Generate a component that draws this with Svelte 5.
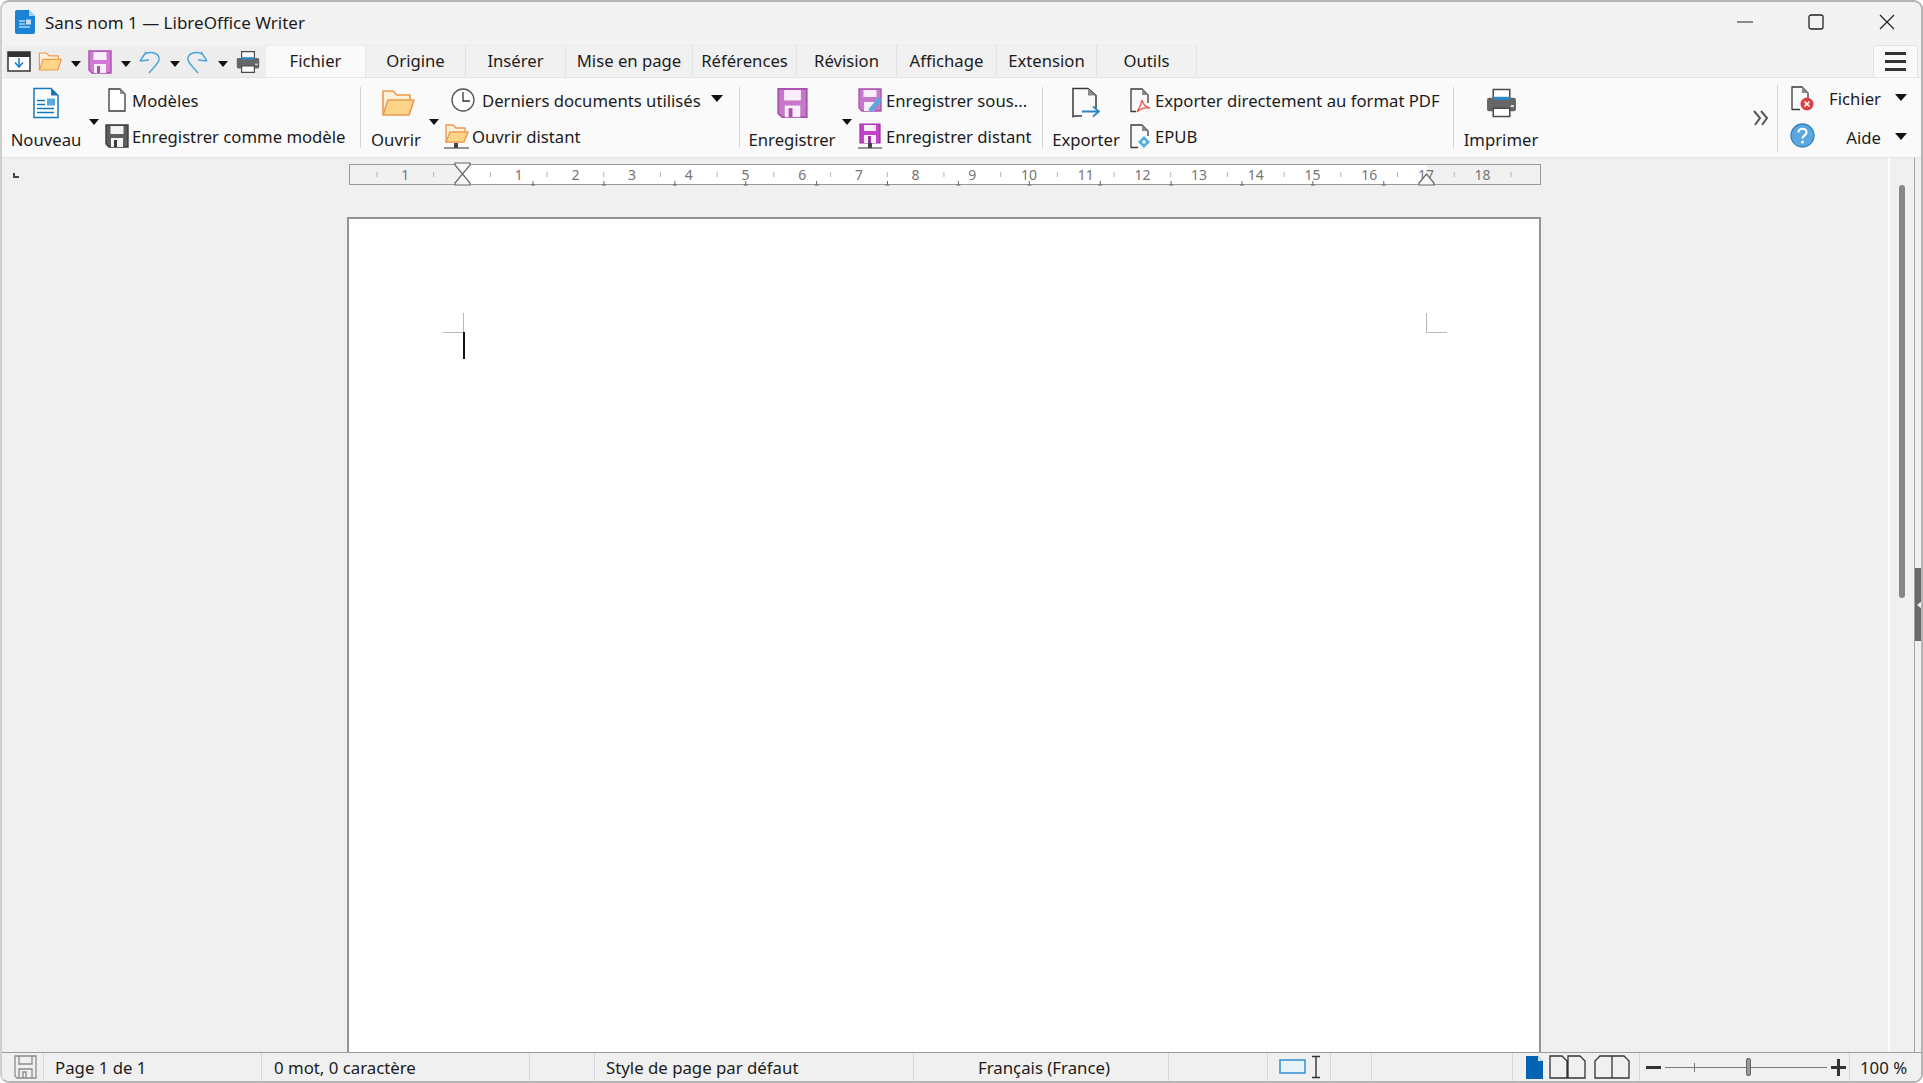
<script>
	const tabs = [
		{ label: 'Fichier', w: 100, active: true },
		{ label: 'Origine', w: 100 },
		{ label: 'Insérer', w: 100 },
		{ label: 'Mise en page', w: 127 },
		{ label: 'Références', w: 104 },
		{ label: 'Révision', w: 100 },
		{ label: 'Affichage', w: 100 },
		{ label: 'Extension', w: 100 },
		{ label: 'Outils', w: 100 }
	];

	// ruler: one cm is 56.7px, zero sits at the left margin
	const cm = 56.7;
	const zero = 113;
	const numbers = [-1, ...Array.from({ length: 18 }, (_, i) => i + 1)];
	const halves = Array.from({ length: 21 }, (_, i) => i - 2 + 0.5);
	const tabStops = Array.from({ length: 13 }, (_, i) => 184 + i * 70.9);
</script>

{#snippet floppy(size, fill, pale, line)}
	<svg width={size} height={size} viewBox="0 0 24 24">
		<path d="M1 1H23V23H4L1 20Z" fill={fill} stroke={line} stroke-width="1.4" />
		<rect x="5.5" y="2" width="13" height="8" fill={pale} />
		<rect x="6" y="14" width="12" height="9" fill={pale} />
		<rect x="9" y="16" width="3" height="7" fill={line} />
	</svg>
{/snippet}

{#snippet page(w, h)}
	<svg width={w} height={h} viewBox="0 0 18 24">
		<path d="M1 1H12L17 6V23H1Z" fill="#fff" stroke="#3a3a3a" stroke-width="1.3" />
		<path d="M12 1V6H17Z" fill="#8c8c8c" />
	</svg>
{/snippet}

{#snippet folder(w, h)}
	<svg width={w} height={h} viewBox="0 0 34 28">
		<path d="M2 26V2H12L16 6H29V12" fill="#fdf0d8" stroke="#ee9a4d" stroke-width="1.6" />
		<path d="M2 26L7 11H33L28 26Z" fill="#fcd58b" stroke="#ee9a4d" stroke-width="1.6" stroke-linejoin="round" />
	</svg>
{/snippet}

{#snippet printer(w, h)}
	<svg width={w} height={h} viewBox="0 0 30 28">
		<path d="M7 10V1H23V10" fill="#fff" stroke="#4a4a4a" stroke-width="1.5" />
		<rect x="1" y="9" width="28" height="13" rx="2" fill="#666" />
		<rect x="7" y="8" width="16" height="3" fill="#2f88c6" />
		<rect x="24" y="16" width="3" height="2" fill="#ddd" />
		<path d="M7 19H23V27H7Z" fill="#fff" stroke="#4a4a4a" stroke-width="1.5" />
	</svg>
{/snippet}

{#snippet caret()}
	<span class="caret"></span>
{/snippet}

<div class="window">
	<header class="titlebar">
		<svg class="app-icon" width="20" height="24" viewBox="0 0 20 24">
			<path d="M2 0H14L20 6V22a2 2 0 0 1-2 2H2a2 2 0 0 1-2-2V2a2 2 0 0 1 2-2Z" fill="#1c82d4" />
			<path d="M14 0L20 6H14Z" fill="#a8d4f2" />
			<path d="M4 11H10M4 14H10M4 17H15" stroke="#fff" stroke-width="1.2" />
			<rect x="11" y="9.5" width="5" height="5" fill="#bfe0f7" />
		</svg>
		<span class="title">Sans nom 1 — LibreOffice Writer</span>
		<div class="winctl">
			<svg width="16" height="16" viewBox="0 0 16 16"><path d="M0 8H16" stroke="#222" stroke-width="1.2" /></svg>
			<svg width="16" height="16" viewBox="0 0 16 16"><rect x="1" y="1" width="14" height="14" rx="2" fill="none" stroke="#222" stroke-width="1.3" /></svg>
			<svg width="16" height="16" viewBox="0 0 16 16"><path d="M1 1L15 15M15 1L1 15" stroke="#222" stroke-width="1.2" /></svg>
		</div>
	</header>

	<div class="tabrow">
		<div class="quick">
			<svg width="24" height="21" viewBox="0 0 24 21">
				<rect x="1" y="1" width="22" height="19" fill="#fff" stroke="#333" stroke-width="1.5" />
				<rect x="1" y="1" width="22" height="5" fill="#333" />
				<path d="M12 7V15M8 11.5L12 16L16 11.5" fill="none" stroke="#1c82d4" stroke-width="1.6" />
			</svg>
			<span class="q-folder">{@render folder(24, 21)}</span>
			{@render caret()}
			<span class="q-save">{@render floppy(24, '#d07ad4', '#fbeefb', '#a94fae')}</span>
			{@render caret()}
			<svg class="q-undo" width="23" height="24" viewBox="0 0 23 24">
				<path d="M2 11L8 2M2 11L11 10M5 6C10 0 22 2 21 10C20 14 14 19 11 23" fill="none" stroke="#4ba3dc" stroke-width="1.4" />
			</svg>
			{@render caret()}
			<svg class="q-redo" width="23" height="24" viewBox="0 0 23 24">
				<path d="M21 11L15 2M21 11L12 10M18 6C13 0 1 2 2 10C3 14 9 19 12 23" fill="none" stroke="#4ba3dc" stroke-width="1.4" />
			</svg>
			{@render caret()}
			<span class="q-print">{@render printer(24, 24)}</span>
		</div>
		<div class="tabs">
			{#each tabs as tab}
				<div class="tab" class:active={tab.active} style="width: {tab.w}px">{tab.label}</div>
			{/each}
		</div>
		<div class="burger"><span></span><span></span><span></span></div>
	</div>

	<div class="ribbon">
		<div class="group g1">
			<div class="big w90 first">
				<svg width="26" height="31" viewBox="0 0 26 31">
					<path d="M1 1H18L25 8V30H1Z" fill="#fff" stroke="#1577bd" stroke-width="1.5" />
					<path d="M18 1V8H25Z" fill="#1577bd" />
					<path d="M4 13H12M4 17H12M4 21H21M4 25H21" stroke="#1577bd" stroke-width="1.3" />
					<rect x="14" y="11" width="8" height="7" fill="#59a9e0" />
				</svg>
				<span class="label">Nouveau</span>
			</div>
			{@render caret()}
			<div class="col m5">
				<div class="row"><span class="ico">{@render page(18, 24)}</span>Modèles</div>
				<div class="row"><span class="ico">{@render floppy(24, '#5e5e5e', '#f4f4f4', '#3a3a3a')}</span>Enregistrer comme modèle</div>
			</div>
		</div>

		<div class="group g2">
			<div class="big w70 open">
				{@render folder(34, 28)}
				<span class="label">Ouvrir</span>
			</div>
			{@render caret()}
			<div class="col m4">
				<div class="row clock">
					<svg width="24" height="24" viewBox="0 0 24 24">
						<circle cx="12" cy="12" r="11" fill="#fff" stroke="#555" stroke-width="1.3" />
						<path d="M12 4V13H19" fill="none" stroke="#333" stroke-width="1.3" />
					</svg>
					Derniers documents utilisés
					<span class="caret after"></span>
				</div>
				<div class="row remote">
					<svg width="25" height="26" viewBox="0 0 25 26">
						<path d="M2 19V2H9L12 5H21V9" fill="#fdf0d8" stroke="#ee9a4d" stroke-width="1.4" />
						<path d="M2 19L6 9H24L20 19Z" fill="#fcd58b" stroke="#ee9a4d" stroke-width="1.4" />
						<path d="M0 25H25" stroke="#333" stroke-width="1" /><rect x="10" y="20" width="4" height="5" fill="#444" />
					</svg>
					Ouvrir distant
				</div>
			</div>
		</div>

		<div class="group g3">
			<div class="big w104">
				{@render floppy(31, '#c678c9', '#fbeefb', '#a94fae')}
				<span class="label">Enregistrer</span>
			</div>
			{@render caret()}
			<div class="col m4">
				<div class="row save-as">
					<svg width="24" height="24" viewBox="0 0 24 24">
						<path d="M1 1H23V23H4L1 20Z" fill="#c678c9" stroke="#a94fae" stroke-width="1.3" />
						<rect x="5.5" y="2" width="13" height="7" fill="#fbeefb" />
						<rect x="6" y="14" width="10" height="9" fill="#fbeefb" />
						<path d="M12 23L22 11" stroke="#59a9e0" stroke-width="4.5" />
					</svg>
					Enregistrer sous...
				</div>
				<div class="row save-as">
					<svg width="24" height="26" viewBox="0 0 24 26">
						<path d="M2 1H22V20H2Z" fill="#c243c9" stroke="#a030a8" stroke-width="1.2" />
						<rect x="6" y="2" width="12" height="6" fill="#fbeefb" />
						<rect x="6" y="12" width="12" height="8" fill="#fbeefb" />
						<rect x="10" y="13" width="3" height="7" fill="#a030a8" />
						<path d="M0 25H24" stroke="#333" stroke-width="1" /><rect x="10" y="20" width="4" height="5" fill="#444" />
					</svg>
					Enregistrer distant
				</div>
			</div>
		</div>

		<div class="group g4">
			<div class="big w86">
				<svg width="28" height="31" viewBox="0 0 28 31">
					<path d="M1 30V1H16L24 8V21M1 28.5H10" fill="none" stroke="#3a3a3a" stroke-width="1.5" />
					<path d="M16 1V8H24Z" fill="#8c8c8c" />
					<path d="M10 24H26M21 19L27 24L21 29" fill="none" stroke="#2f88c6" stroke-width="1.8" />
				</svg>
				<span class="label">Exporter</span>
			</div>
			<div class="col">
				<div class="row doc">
					<svg width="20" height="25" viewBox="0 0 20 25">
						<path d="M1 24V1H12L18 7V15M1 23.5H6" fill="none" stroke="#3a3a3a" stroke-width="1.3" />
						<path d="M12 1V7H18Z" fill="#8c8c8c" />
						<path d="M12 12C11 18 9 21 7 24C11 20 15 19 20 20C15 19 13 16 12 12Z" fill="none" stroke="#e8615a" stroke-width="1.5" />
					</svg>
					Exporter directement au format PDF
				</div>
				<div class="row doc">
					<svg width="20" height="25" viewBox="0 0 20 25">
						<path d="M1 24V1H12L18 7V12M1 23.5H8" fill="none" stroke="#3a3a3a" stroke-width="1.3" />
						<path d="M12 1V7H18Z" fill="#8c8c8c" />
						<path d="M14 12L20 18L14 24L8 18Z" fill="#4fb0dc" /><rect x="12.5" y="16.5" width="3" height="3" fill="#fff" />
					</svg>
					EPUB
				</div>
			</div>
		</div>

		<div class="group g5">
			<div class="big w94">
				{@render printer(31, 28)}
				<span class="label">Imprimer</span>
			</div>
		</div>

		<svg class="more" width="16" height="16" viewBox="0 0 16 16">
			<path d="M1 1L7 8L2 15M8 1L14 8L9 15" fill="none" stroke="#555" stroke-width="2" />
		</svg>

		<div class="group g6">
			<div class="row side">
				<svg width="23" height="25" viewBox="0 0 23 25">
					<path d="M1 24V1H11L17 7V13M1 23.5H9" fill="none" stroke="#3a3a3a" stroke-width="1.3" />
					<path d="M11 1V7H17Z" fill="#8c8c8c" />
					<circle cx="16" cy="18" r="6.5" fill="#dc3f46" />
					<path d="M13.5 15.5L18.5 20.5M18.5 15.5L13.5 20.5" stroke="#fff" stroke-width="1.6" />
				</svg>
				<span class="side-text">Fichier</span>
				<span class="caret"></span>
			</div>
			<div class="row side">
				<svg class="help" width="25" height="25" viewBox="0 0 25 25">
					<circle cx="12.5" cy="12.5" r="11.5" fill="#5aa6de" stroke="#2f7fc0" stroke-width="1.3" />
					<path d="M8.5 9.5C8.5 4.5 16.5 4.5 16.5 9.5C16.5 12.5 12.5 12.5 12.5 15.5" fill="none" stroke="#fff" stroke-width="2.2" />
					<circle cx="12.5" cy="19" r="1.5" fill="#fff" />
				</svg>
				<span class="side-text">Aide</span>
				<span class="caret"></span>
			</div>
		</div>
	</div>

	<div class="main">
		<div class="content">
			<div class="rulerbar">
				<span class="corner"></span>
				<svg class="ruler" width="1193" height="24" viewBox="0 0 1193 24">
					<rect x="0.5" y="2.5" width="1191" height="20" fill="#f1f1f1" stroke="#9a9a9a" />
					<rect x="113" y="3" width="965" height="19" fill="#fff" />
					{#each halves as n}
						<path d="M{zero + n * cm} 10V15" stroke="#b5b5b5" />
					{/each}
					{#each numbers as n}
						<text x={zero + n * cm} y="17.5" class="num">{Math.abs(n)}</text>
					{/each}
					{#each tabStops as x}
						<path d="M{x} 19V23M{x - 2} 23H{x + 2}" stroke="#666" />
					{/each}
					<path d="M106 1H121V3L113.5 12L121 21V23H106V21L113.5 12L106 3Z" fill="#f7f7f7" stroke="#666" stroke-width="1.2" />
					<path d="M1077.5 12L1070 21V23H1085V21Z" fill="#f7f7f7" stroke="#666" stroke-width="1.2" />
				</svg>
			</div>
			<div class="workspace">
				<div class="sheet">
					<span class="crop tl"></span>
					<span class="crop tr"></span>
					<span class="cursor"></span>
				</div>
			</div>
		</div>
		<div class="scrollcol">
			<div class="thumb"></div>
		</div>
		<div class="sidebar">
			<div class="handle"><span></span></div>
		</div>
	</div>

	<footer class="status">
		<div class="cell c-save">
			<svg width="23" height="24" viewBox="0 0 23 24" fill="none" stroke="#8a8a8a" stroke-width="1.3">
				<path d="M1 1H22V23H3L1 21Z" />
				<path d="M5 1V9H18V1M5 23V14H18V23M9 23V17H12V23" />
			</svg>
		</div>
		<div class="cell c-page">Page 1 de 1</div>
		<div class="cell c-words">0 mot, 0 caractère</div>
		<div class="cell c-gap"></div>
		<div class="cell c-style">Style de page par défaut</div>
		<div class="cell c-lang">Français (France)</div>
		<div class="cell c-ins"></div>
		<div class="cell c-sel">
			<svg width="48" height="24" viewBox="0 0 48 24">
				<rect x="1" y="5" width="25" height="13" fill="#e8f3fa" stroke="#3d97d3" stroke-width="1.6" />
				<path d="M37 2V22M33 1.5H41M33 22.5H41" stroke="#333" stroke-width="1.4" fill="none" />
			</svg>
		</div>
		<div class="cell c-a"></div>
		<div class="cell c-b"></div>
		<div class="cell c-views">
			<svg width="18" height="24" viewBox="0 0 18 24"><path d="M1 1H13L18 6V24H1Z" fill="#0563b4" /><path d="M13 1L18 6H13Z" fill="#cfe3f4" /></svg>
			<svg width="39" height="24" viewBox="0 0 39 24" fill="none" stroke="#333" stroke-width="1.3"><path d="M1 23V1H13L18 6V23ZM19 23V1H31L36 6V23Z" /></svg>
			<svg width="36" height="24" viewBox="0 0 36 24" fill="none" stroke="#333" stroke-width="1.3"><path d="M18 23V1H6L1 6V23ZM18 23V1H30L35 6V23Z" /></svg>
		</div>
		<div class="cell c-zoom">
			<svg width="15" height="15" viewBox="0 0 15 15"><path d="M0 7.5H15" stroke="#333" stroke-width="3" /></svg>
			<div class="slider"><i class="tick"></i><i class="knob"></i></div>
			<svg width="15" height="17" viewBox="0 0 15 17"><path d="M0 8.5H15M7.5 0V17" stroke="#333" stroke-width="3" /></svg>
		</div>
		<div class="cell c-pct">100 %</div>
	</footer>
</div>

<style>
	:global(body) {
		background: #fff;
	}

	.window {
		box-sizing: border-box;
		width: 1923px;
		height: 1083px;
		display: flex;
		flex-direction: column;
		overflow: hidden;
		background: #f3f3f3;
		border: 2px solid #b4b4b4;
		border-left-color: #cfcfcf;
		border-radius: 9px;
		font-family: "Noto Sans", "Open Sans", sans-serif;
		font-size: 16.7px;
		color: #1c1c1c;
	}

	.titlebar {
		box-sizing: border-box;
		flex: none;
		height: 43px;
		display: flex;
		align-items: center;
		padding: 0 26px 3px 13px;
	}

	.app-icon {
		margin-right: 10px;
	}

	.title {
		font-size: 17px;
	}

	.winctl {
		margin-left: auto;
		display: flex;
		gap: 55px;
		align-items: center;
	}

	.tabrow {
		flex: none;
		height: 32px;
		display: flex;
		align-items: flex-end;
	}

	.quick {
		box-sizing: border-box;
		width: 261px;
		height: 31px;
		margin-left: 3px;
		padding-left: 2px;
		display: flex;
		align-items: center;
		background: #ededed;
	}

	.q-folder { margin-left: 7px; display: flex; }
	.q-save { margin-left: 7px; display: flex; }
	.q-undo { margin-left: 7px; }
	.q-redo { margin-left: 6px; }
	.q-print { margin-left: 8px; display: flex; }
	.quick .caret { margin-left: 9px; margin-top: 4px; }

	.tabs {
		display: flex;
		height: 32px;
	}

	.tab {
		box-sizing: border-box;
		display: flex;
		align-items: center;
		justify-content: center;
		padding-bottom: 2px;
		background: #f1f1f1;
		border-right: 1px solid #e2e2e2;
		border-top: 1px solid #ececec;
		white-space: nowrap;
	}

	.tab.active {
		background: #fafafa;
		border-right-color: #e6e6e6;
	}

	.burger {
		box-sizing: border-box;
		margin-left: auto;
		margin-right: 3px;
		width: 45px;
		height: 32px;
		display: flex;
		flex-direction: column;
		justify-content: center;
		align-items: center;
		gap: 5px;
		background: #fafafa;
		border: 1px solid #e2e2e2;
		border-bottom: none;
		border-radius: 3px 3px 0 0;
	}

	.burger span {
		width: 21px;
		height: 3px;
		background: #333;
	}

	.ribbon {
		flex: none;
		height: 81px;
		display: flex;
		background: #fafafa;
		border-top: 1px solid #e4e4e4;
		border-bottom: 1px solid #e4e4e4;
		box-sizing: border-box;
		margin: 0 -2px;
		padding-left: 3px;
	}

	.group {
		display: flex;
		position: relative;
	}

	.group + .group::before {
		content: "";
		position: absolute;
		left: -1px;
		top: 9px;
		bottom: 9px;
		width: 1px;
		background: #d4d4d4;
	}

	.g1 { width: 358px; }
	.g2 { width: 379px; }
	.g3 { width: 303px; }
	.g4 { width: 411px; }
	.g5 { width: 296px; }

	.big {
		display: flex;
		flex-direction: column;
		align-items: center;
		height: 100%;
	}

	.big svg {
		height: 32px;
		margin-top: 9px;
	}

	.first {
		margin-left: -2px;
	}

	.open svg {
		margin-left: 4px;
	}

	.label {
		margin-top: 8px;
		line-height: 26px;
		white-space: nowrap;
	}

	.w90 { width: 90px; }
	.w70 { width: 70px; }
	.w104 { width: 104px; }
	.w86 { width: 86px; }
	.w94 { width: 94px; }

	.caret {
		flex: none;
		width: 0;
		height: 0;
		border-left: 5.5px solid transparent;
		border-right: 5.5px solid transparent;
		border-top: 6px solid #111;
	}

	.group > .caret {
		margin-top: 41px;
		margin-left: -2px;
	}

	.col {
		padding-top: 4px;
		display: flex;
		flex-direction: column;
	}

	.m5 { margin-left: 5px; }
	.m4 { margin-left: 4px; }

	.row {
		height: 36px;
		display: flex;
		align-items: center;
		white-space: nowrap;
	}

	.ico {
		width: 26px;
		margin-right: 2px;
		display: flex;
		justify-content: center;
	}

	.clock svg {
		margin: 0 7px 0 8px;
	}

	.caret.after {
		margin-left: 10px;
		margin-top: -3px;
		border-left-width: 6px;
		border-right-width: 6px;
		border-top-width: 7px;
	}

	.remote svg {
		margin: 0 3px 0 1px;
	}

	.save-as svg {
		margin: 0 4px 0 2px;
	}

	.doc svg {
		margin: 0 5px 0 1px;
	}

	.more {
		align-self: center;
		margin: 0 8px 0 3px;
	}

	.g6 {
		flex-direction: column;
		width: 145px;
	}

	.group.g6::before {
		display: block;
	}

	.g6::before {
		content: "";
		position: absolute;
		left: 0;
		top: 7px;
		bottom: 5px;
		width: 1px;
		background: #d4d4d4;
	}

	.side {
		height: 39px;
		padding-left: 13px;
	}

	.side:first-child {
		margin-top: 1px;
	}

	.side svg {
		width: 25px;
	}

	.side svg.help {
		margin-bottom: 5px;
	}

	.side-text {
		width: 66px;
		text-align: right;
	}

	.side .caret {
		margin-left: 14px;
		margin-top: -2px;
		border-left-width: 6px;
		border-right-width: 6px;
		border-top-width: 7px;
	}

	.main {
		flex: 1;
		min-height: 0;
		display: flex;
		margin: 0 -2px 0 0;
	}

	.content {
		flex: 1;
		min-width: 0;
		display: flex;
		flex-direction: column;
		background: #f0f0f0;
	}

	.rulerbar {
		height: 59px;
		display: flex;
		align-items: flex-start;
		padding-top: 4px;
		box-sizing: border-box;
	}

	.corner {
		width: 6px;
		height: 5px;
		margin: 11px 0 0 11px;
		border-left: 2px solid #444;
		border-bottom: 2px solid #444;
		box-sizing: border-box;
	}

	.ruler {
		margin-left: 330px;
		flex: none;
	}

	.num {
		font-family: "Noto Sans", sans-serif;
		font-size: 14px;
		fill: #757575;
		text-anchor: middle;
	}

	.workspace {
		flex: 1;
		min-height: 0;
		padding-left: 345px;
	}

	.sheet {
		box-sizing: border-box;
		position: relative;
		width: 1194px;
		height: 100%;
		background: #fff;
		border: 2px solid #949494;
		border-bottom: none;
	}

	.crop {
		position: absolute;
		width: 20px;
		height: 19px;
		top: 94px;
		border-bottom: 1px solid #b8b8b8;
	}

	.crop.tl {
		left: 94px;
		border-right: 1px solid #b8b8b8;
	}

	.crop.tr {
		left: 1077px;
		border-left: 1px solid #b8b8b8;
	}

	.cursor {
		position: absolute;
		left: 114px;
		top: 113px;
		width: 2px;
		height: 27px;
		background: #111;
	}

	.scrollcol {
		box-sizing: border-box;
		flex: none;
		width: 26px;
		background: #f0f0f0;
		border-left: 2px solid #fbfbfb;
	}

	.thumb {
		width: 6px;
		height: 413px;
		margin: 27px 0 0 9px;
		border-radius: 3px;
		background: #878787;
	}

	.sidebar {
		flex: none;
		width: 8px;
		border-left: 1px solid #a4a4a4;
		background: #f0f0f0;
	}

	.handle {
		width: 7px;
		height: 73px;
		margin-top: 410px;
		background: #6a6a6a;
		display: flex;
		align-items: center;
		justify-content: flex-end;
	}

	.handle span {
		border-top: 4px solid transparent;
		border-bottom: 4px solid transparent;
		border-right: 5px solid #eee;
	}

	.status {
		flex: none;
		height: 29px;
		display: flex;
		background: #f0f0f0;
		border-top: 1px solid #9c9c9c;
		font-size: 16.8px;
		box-sizing: border-box;
		margin-right: -2px;
	}

	.cell {
		box-sizing: border-box;
		height: 100%;
		display: flex;
		align-items: center;
		border-right: 1px solid #d6d6d6;
		white-space: nowrap;
	}

	.c-save { width: 42px; padding-left: 12px; }
	.c-page { width: 218px; padding-left: 11px; }
	.c-words { width: 268px; padding-left: 12px; }
	.c-gap { width: 65px; }
	.c-style { width: 319px; padding-left: 11px; }
	.c-lang { width: 255px; justify-content: center; padding-left: 6px; }
	.c-ins { width: 99px; }
	.c-sel { width: 63px; padding-left: 11px; }
	.c-a { width: 41px; }
	.c-b { width: 141px; }
	.c-views { width: 127px; padding-left: 12px; gap: 6px; }
	.c-zoom { width: 210px; padding: 0 3px 0 6px; gap: 4px; }
	.c-pct { width: 71px; padding-left: 10px; border-right: none; }

	.slider {
		position: relative;
		flex: 1;
		height: 1px;
		background: #777;
	}

	.tick {
		position: absolute;
		left: 29px;
		top: -4px;
		width: 1px;
		height: 9px;
		background: #777;
	}

	.knob {
		position: absolute;
		left: 81px;
		top: -9px;
		width: 5px;
		height: 18px;
		background: #999;
		border: 1px solid #666;
		box-sizing: border-box;
		border-radius: 2px;
	}
</style>
